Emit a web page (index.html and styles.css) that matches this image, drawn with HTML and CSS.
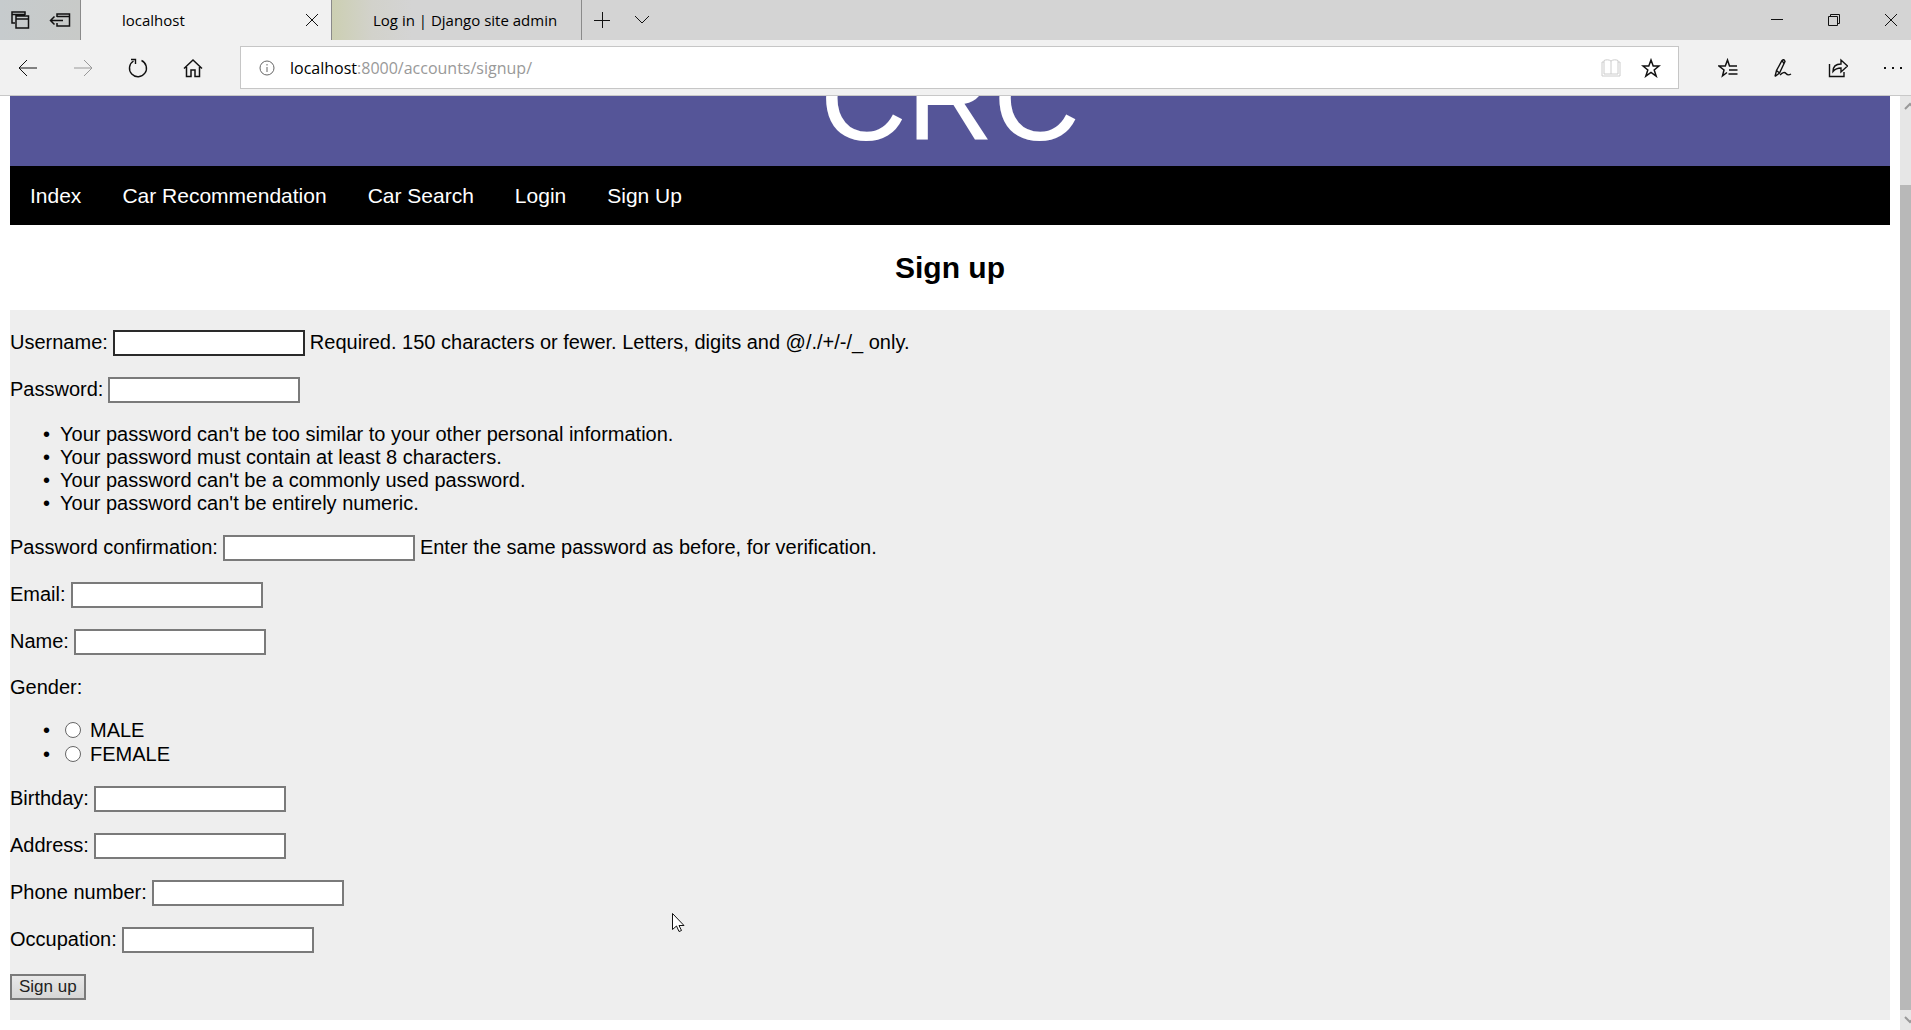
FILE: index.html
```html
<!DOCTYPE html>
<html lang="en">
<head>
<meta charset="utf-8">
<title>Sign up</title>
<link rel="stylesheet" href="styles.css">
</head>
<body>
<div class="tab-strip">
  <div class="tab-tools">
    <button class="tool" aria-label="Tabs you've set aside"><svg width="20" height="20" viewBox="0 0 20 20"><path d="M5 13H2V2h13v3M2 4.500h13M6 6h12.500v12H6zM6 9h12.500" stroke-width="1.500"/></svg></button>
    <button class="tool" aria-label="Set these tabs aside"><svg width="22" height="20" viewBox="0 0 22 20"><path d="M8 7V4h12.500v12H8v-3M8 6.500h12.500M1.500 10.500H14M5.500 6.500l-4 4 4 4" stroke-width="1.500"/></svg></button>
  </div>
  <div class="tab tab-current"><span class="tab-title">localhost</span><button class="tab-close" aria-label="Close tab"><svg width="14" height="14" viewBox="0 0 14 14"><path d="M1 1l12 12M13 1L1 13"/></svg></button></div>
  <div class="tab tab-back"><span class="tab-title">Log in | Django site admin</span></div>
  <div class="tab-actions">
    <button class="tool" aria-label="New tab"><svg width="18" height="18" viewBox="0 0 18 18"><path d="M1 9.500h16M9.500 1v16"/></svg></button>
    <button class="tool" aria-label="Tab previews"><svg width="18" height="12" viewBox="0 0 18 12"><path d="M2 2l7 7 7-7"/></svg></button>
  </div>
  <div class="window-controls">
    <button class="window-button" aria-label="Minimize"><svg width="12" height="12" viewBox="0 0 12 12"><path d="M0 5.500h12"/></svg></button>
    <button class="window-button" aria-label="Restore"><svg width="12" height="12" viewBox="0 0 12 12"><path d="M.5 2.500h9v9h-9zM2.500 2.500v-2h9v9h-2"/></svg></button>
    <button class="window-button" aria-label="Close"><svg width="12" height="12" viewBox="0 0 12 12"><path d="M0 0l12 12M12 0L0 12"/></svg></button>
  </div>
</div>

<div class="toolbar">
  <button class="nav-button" aria-label="Back"><svg width="20" height="18" viewBox="0 0 20 18"><path d="M1 9h18M9 1L1 9l8 8"/></svg></button>
  <button class="nav-button" aria-label="Forward" disabled><svg width="20" height="18" viewBox="0 0 20 18"><path d="M1 9h18M11 1l8 8-8 8"/></svg></button>
  <button class="nav-button" aria-label="Refresh"><svg width="20" height="20" viewBox="0 0 20 20"><path d="M13.500 2.500A8.500 8.500 0 1 1 5.500 3M3 1.500h4.500V6" stroke-width="1.400"/></svg></button>
  <button class="nav-button" aria-label="Home"><svg width="20" height="20" viewBox="0 0 20 20"><path d="M1 10.500l9-8.500 9 8.500M3.500 9v9.500H8V12h4v6.500h4.500V9" stroke-width="1.500"/></svg></button>
  <div class="address-bar">
    <svg class="info" width="16" height="16" viewBox="0 0 16 16"><circle cx="8" cy="8" r="7"/><path d="M8 7v5M8 4v1.500"/></svg>
    <a class="address" href="#">localhost<span class="address-path">:8000/accounts/signup/</span></a>
    <button class="address-button" aria-label="Reading view" disabled><svg width="20" height="20" viewBox="0 0 20 20"><path d="M10 3v13M10 3C8 1.500 5 1.500 3 2.500V16h14V2.500C15 1.500 12 1.500 10 3M3 4H1v14h18V4h-2"/></svg></button>
    <button class="address-button" aria-label="Add to favorites"><svg width="20" height="20" viewBox="0 0 20 20"><path d="M10 2l2.200 6H18l-4.800 4 2 6.200L10 14.500l-5.200 3.700 2-6.200L2 8h5.800z" stroke-width="1.500"/></svg></button>
  </div>
  <div class="toolbar-actions">
    <button class="nav-button" aria-label="Hub"><svg width="20" height="20" viewBox="0 0 20 20"><path d="M9 14.500l-4.500 3.300L6 12 1 8h6.300L9.500 2l2 6H19M11 12h8.500M10.500 16h9" stroke-width="1.500"/></svg></button>
    <button class="nav-button" aria-label="Add notes"><svg width="20" height="20" viewBox="0 0 20 20"><path d="M2 18.500l1.500-6L9 2.500q2-2 3 1L6.500 15 2 18.500M3.500 12.500l3 2.500M9.500 3L11 6M7 17q4-4 6-1.500t5 .5" stroke-width="1.400"/></svg></button>
    <button class="nav-button" aria-label="Share"><svg width="20" height="20" viewBox="0 0 20 20"><path d="M1.500 6v12.500H16V14M5 13.500Q5 6 13 6V2l6.500 6-6.500 6v-4q-5 0-8 3.500z" stroke-width="1.400"/></svg></button>
    <button class="nav-button" aria-label="Settings and more"><svg width="20" height="4" viewBox="0 0 20 4"><path class="solid" d="M1 1h2v2H1zM9 1h2v2H9zM17 1h2v2h-2z"/></svg></button>
  </div>
</div>

<div class="viewport">
  <div class="page">
    <header class="banner"><div class="banner-title">CRC</div></header>
    <nav class="site-nav">
      <a href="#">Index</a>
      <a href="#">Car Recommendation</a>
      <a href="#">Car Search</a>
      <a href="#">Login</a>
      <a href="#">Sign Up</a>
    </nav>
    <h2>Sign up</h2>
    <form class="signup">
      <div class="field"><label for="username">Username:</label><input class="active" type="text" id="username"><span>Required. 150 characters or fewer. Letters, digits and @/./+/-/_ only.</span></div>
      <div class="field"><label for="password1">Password:</label><input type="password" id="password1"></div>
      <ul>
        <li>Your password can't be too similar to your other personal information.</li>
        <li>Your password must contain at least 8 characters.</li>
        <li>Your password can't be a commonly used password.</li>
        <li>Your password can't be entirely numeric.</li>
      </ul>
      <div class="field"><label for="password2">Password confirmation:</label><input type="password" id="password2"><span>Enter the same password as before, for verification.</span></div>
      <div class="field"><label for="email">Email:</label><input type="email" id="email"></div>
      <div class="field"><label for="name">Name:</label><input type="text" id="name"></div>
      <div id="gender-label">Gender:</div>
      <ul class="choices" role="radiogroup" aria-labelledby="gender-label">
        <li><label><input type="radio" name="gender">MALE</label></li>
        <li><label><input type="radio" name="gender">FEMALE</label></li>
      </ul>
      <div class="field"><label for="birthday">Birthday:</label><input type="text" id="birthday"></div>
      <div class="field"><label for="address">Address:</label><input type="text" id="address"></div>
      <div class="field"><label for="phone">Phone number:</label><input type="text" id="phone"></div>
      <div class="field"><label for="occupation">Occupation:</label><input type="text" id="occupation"></div>
      <button class="submit" type="button">Sign up</button>
    </form>
  </div>
  <div class="scrollbar">
    <svg class="arrow" width="12" height="8" viewBox="0 0 12 8"><path d="M1 7l5-5 5 5"/></svg>
    <div class="thumb"></div>
    <svg class="arrow" width="12" height="8" viewBox="0 0 12 8"><path d="M1 1l5 5 5-5"/></svg>
  </div>
</div>
<svg class="pointer" width="14" height="20" viewBox="0 0 14 20"><path d="M.5 .5v16l4-3.500 2.500 5.500 2.500-1-2.500-5H12z"/></svg>
</body>
</html>
```
FILE: styles.css
```css
* { box-sizing: border-box; }

body {
  margin: 0;
  height: 100vh;
  display: flex;
  flex-direction: column;
  overflow: hidden;
  background: #fff;
  color: #000;
  font: 20px/23px "Liberation Sans", Arial, sans-serif;
}

button {
  margin: 0;
  padding: 0;
  border: 0;
  background: none;
  color: inherit;
  font: inherit;
}

svg {
  display: block;
  flex: none;
  fill: none;
  stroke: #111;
}

.solid { fill: #111; stroke: none; }

/* Tab strip */
.tab-strip,
.toolbar {
  flex: none;
  display: flex;
  font: 15px/20px "Open Sans", "Noto Sans", sans-serif;
}

.tab-strip { height: 40px; background: #d4d4d4; }

.tab-tools {
  display: flex;
  width: 81px;
  background: linear-gradient(90deg, #c6cbcd, #c8cac8);
  border-right: 1px solid #8a8a8a;
}

.tool {
  width: 40px;
  display: grid;
  place-items: center;
}

.tab {
  width: 250px;
  display: flex;
  align-items: center;
  padding-left: 41px;
}

.tab-current { background: #f1f1f1; }

.tab-back {
  border: solid #8a8a8a;
  border-width: 0 1px;
  width: 251px;
  background: linear-gradient(90deg, #cccfb2, #d2d2cb 40px, #d4d4d4 80px);
}

.tab-title { flex: 1; white-space: nowrap; }

.tab-close {
  width: 38px;
  height: 40px;
  display: grid;
  place-items: center;
}

.tab-actions { display: flex; }

.window-controls {
  display: flex;
  margin-left: auto;
  margin-right: -8px;
}

.window-button {
  width: 57px;
  display: grid;
  place-items: center;
}

/* Toolbar */
.toolbar {
  height: 56px;
  align-items: center;
  background: #f1f1f1;
  border-bottom: 1px solid #c8c8c8;
}

.nav-button {
  width: 55px;
  height: 54px;
  display: grid;
  place-items: center;
}

button:disabled svg { stroke: #999; }

.address-bar {
  flex: 1;
  height: 43px;
  margin: 0 21px 0 20px;
  display: flex;
  align-items: center;
  background: #fff;
  border: 1px solid #c6c6c6;
}

.info { margin: 0 15px 0 18px; stroke: #666; }

.address {
  flex: 1;
  color: #000;
  font-size: 16px;
  text-decoration: none;
}

.address-path { color: #999; }

.address-button {
  width: 40px;
  display: grid;
  place-items: center;
}

.address-button:disabled svg { stroke: #ccc; }

.address-button:last-child { margin-right: 7px; }

.toolbar-actions { display: flex; margin-right: -9px; }

/* Page */
.viewport { flex: 1; min-height: 0; display: flex; }

.page { flex: 1; padding: 0 10px; overflow: hidden; }

.banner {
  height: 70px;
  padding-bottom: 8px;
  display: flex;
  align-items: flex-end;
  justify-content: center;
  overflow: hidden;
  background: #555598;
}

.banner-title { color: #fff; font-size: 120px; line-height: 120px; }

.site-nav { display: flex; gap: 1px; background: #000; }

.site-nav a {
  padding: 18px 20px 17px;
  color: #fff;
  font-size: 21px;
  line-height: 24px;
  text-decoration: none;
}

h2 {
  margin: 25px 0;
  font-size: 30px;
  line-height: 35px;
  text-align: center;
}

.signup {
  display: flex;
  flex-direction: column;
  align-items: flex-start;
  gap: 20px;
  padding: 20px 0;
  background: #eee;
}

.field {
  min-height: 27px;
  display: flex;
  align-items: flex-start;
  gap: 5px;
  line-height: 25px;
}

.field input {
  width: 192px;
  height: 26px;
  padding: 2px;
  background: #fff;
  border: 2px solid #7a7a7a;
  border-radius: 0;
  font: inherit;
  outline: none;
}

.field .active { border-color: #2a2a2a; }

ul {
  margin: -1px 0 0;
  padding-left: 50px;
  list-style: none;
}

li::before {
  content: "•";
  display: inline-block;
  width: 17px;
  margin-left: -17px;
}

.choices li { display: flex; line-height: 24px; }

.choices label { display: flex; align-items: center; }

.choices input {
  appearance: none;
  width: 16px;
  height: 16px;
  margin: 0 9px 0 5px;
  background: #fff;
  border: 1px solid #666;
  border-radius: 50%;
}

.submit {
  height: 26px;
  padding: 0 7px;
  border: 2px solid #7a7a7a;
  background: linear-gradient(#e8e8e8, #d6d6d6);
  color: #222;
  font-size: 17px;
  line-height: 22px;
}

/* Scrollbar, cut off by the right edge of the window */
.scrollbar {
  width: 11px;
  display: flex;
  flex-direction: column;
  overflow: hidden;
  background: #e6e6e6;
}

.scrollbar .arrow { margin: 6px 0 6px 4px; stroke: #999; stroke-width: 2; }

.thumb { flex: 1; margin-top: 69px; background: #b8b8b8; }

.pointer {
  position: absolute;
  left: 672px;
  top: 913px;
  fill: #fff;
}
```
